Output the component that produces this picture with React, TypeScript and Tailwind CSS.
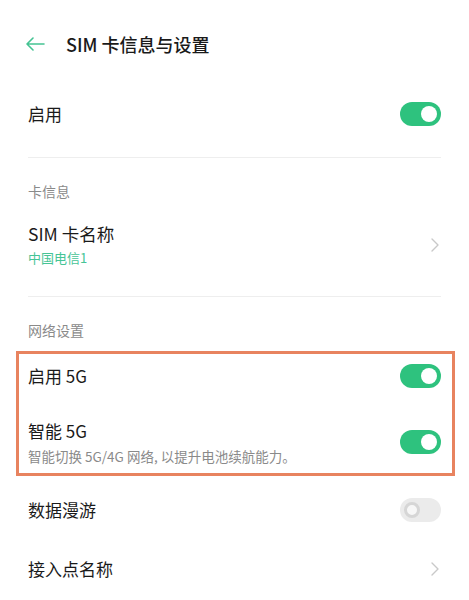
import React from 'react';

const font = { fontFamily: '"Noto Sans CJK SC", "Noto Sans", sans-serif' };

function Toggle({ on }: { on: boolean }) {
  if (on) {
    return (
      <div className="flex h-[24px] w-[41px] shrink-0 items-center justify-end rounded-full bg-[#2ec27e] pr-[4px]">
        <div className="h-[16px] w-[16px] rounded-full bg-white" />
      </div>
    );
  }
  return (
    <div className="flex h-[24px] w-[41px] shrink-0 items-center justify-start rounded-full bg-[#ebebeb] pl-[4px]">
      <div className="h-[16px] w-[16px] rounded-full border-[3px] border-[#d6d6d6] bg-[#f7f7f7]" />
    </div>
  );
}

function Chevron() {
  return (
    <svg width="10" height="16" viewBox="0 0 10 16" className="shrink-0">
      <path d="M2 2 L8 8 L2 14" fill="none" stroke="#c9c9c9" strokeWidth="1.4" strokeLinecap="round" strokeLinejoin="round" />
    </svg>
  );
}

export default function App() {
  return (
    <div className="h-[600px] w-[469px] overflow-hidden bg-white text-[#1a1a1a]" style={font}>
      {/* 顶部栏 */}
      <div className="flex h-[88px] items-center pl-[25px]">
        <svg width="20" height="14" viewBox="0 0 20 14">
          <path d="M19 7 H2 M8 1 L2 7 L8 13" fill="none" stroke="#45c393" strokeWidth="1.6" strokeLinecap="round" strokeLinejoin="round" />
        </svg>
        <div className="ml-[21px] text-[18px] font-medium leading-[24px]">SIM 卡信息与设置</div>
      </div>

      {/* 启用 */}
      <div className="flex h-[52px] items-center justify-between pl-[28px] pr-[28px]">
        <span className="text-[17px] leading-[24px]">启用</span>
        <Toggle on />
      </div>

      <div className="mx-[28px] mt-[17px] h-px bg-[#eeeeee]" />

      {/* 卡信息 */}
      <div className="pl-[28px] pt-[23px] text-[14px] leading-[20px] text-[#8a8a8a]">卡信息</div>

      <div className="mt-[21px] flex items-center justify-between pl-[28px] pr-[29px]">
        <div className="flex flex-col">
          <span className="text-[17.5px] leading-[24px]">SIM 卡名称</span>
          <span className="mt-[3px] text-[13px] leading-[18px] text-[#46c496]">中国电信1</span>
        </div>
        <Chevron />
      </div>

      <div className="mx-[28px] mt-[29px] h-px bg-[#eeeeee]" />

      {/* 网络设置 */}
      <div className="pl-[28px] pt-[23px] text-[14px] leading-[20px] text-[#8a8a8a]">网络设置</div>

      <div className="ml-[16px] mr-[14px] mt-[11px] border-[3px] border-[#e8835f] pb-[8px] pl-[9px] pr-[11px]">
        <div className="flex h-[44px] items-center justify-between">
          <span className="text-[17px] leading-[24px]">启用 5G</span>
          <Toggle on />
        </div>
        <div className="mt-[21px] flex items-center justify-between">
          <div className="flex flex-col">
            <span className="text-[17px] leading-[24px]">智能 5G</span>
            <span className="mt-[4px] text-[13.5px] leading-[18px] text-[#8a8a8a]">智能切换 5G/4G 网络, 以提升电池续航能力。</span>
          </div>
          <Toggle on />
        </div>
      </div>

      <div className="mt-[22px] flex items-center justify-between pl-[28px] pr-[28px]">
        <span className="text-[17px] leading-[24px]">数据漫游</span>
        <Toggle on={false} />
      </div>

      <div className="mt-[35px] flex items-center justify-between pl-[28px] pr-[29px]">
        <span className="text-[17px] leading-[24px]">接入点名称</span>
        <Chevron />
      </div>
    </div>
  );
}
